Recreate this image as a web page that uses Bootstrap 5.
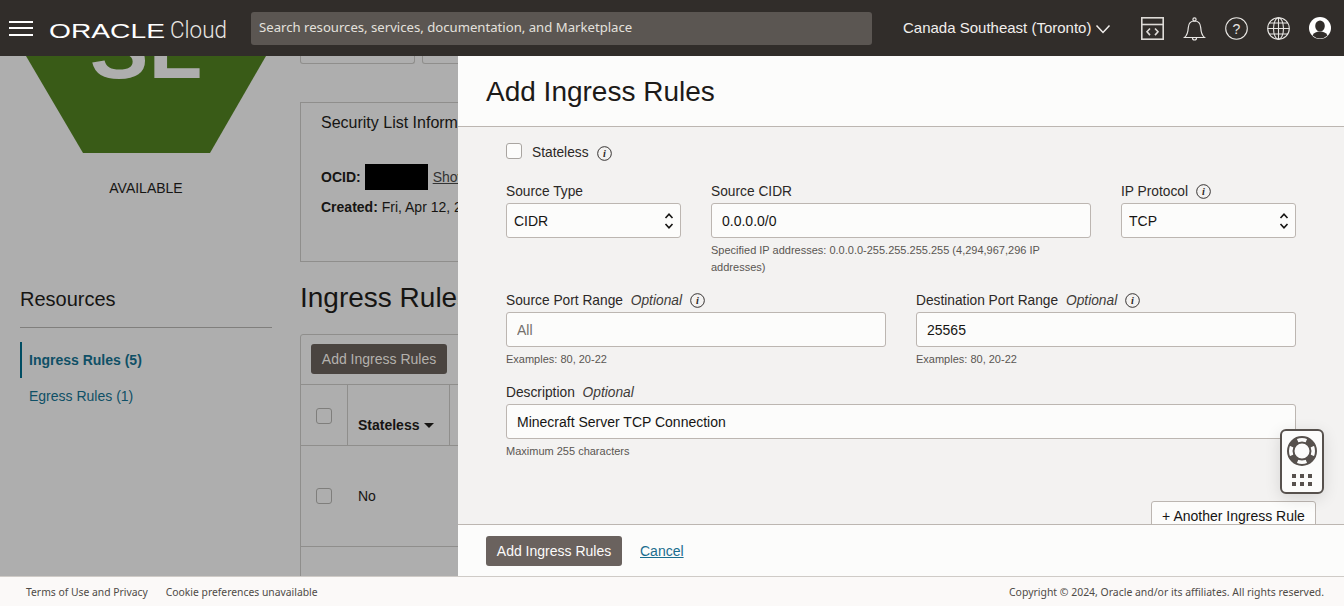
<!DOCTYPE html>
<html lang="en">
<head>
    <meta charset="UTF-8">
    <meta name="viewport" content="width=device-width, initial-scale=1.0">
    <title>Add Ingress Rules</title>
    <link rel="stylesheet" href="https://cdn.jsdelivr.net/npm/bootstrap@5.3.3/dist/css/bootstrap.min.css">
    <script src="https://cdn.jsdelivr.net/npm/bootstrap@5.3.3/dist/js/bootstrap.bundle.min.js"></script>
    <style>
        html, body { height: 606px; overflow: hidden; }
        body { font-family: "Liberation Sans", Arial, sans-serif; font-size: 14px; color: #161513; background: #aeaeae; }

        /* top bar */
        .topbar { height: 56px; background: #312d2a; color: #fcfbfa; padding: 0 12px 0 9px; flex: none; }
        .burger { width: 24px; height: 15px; border-top: 2px solid #fff; border-bottom: 2px solid #fff; position: relative; }
        .burger::after { content: ""; position: absolute; left: 0; right: 0; top: 4.500px; height: 2px; background: #fff; }
        .brand { margin-left: 16px; width: 179px; height: 30px; }
        .search-box { margin-left: 23px; width: 621px; height: 33px; background: #5b5652; border-radius: 3px; padding: 0 8px; font-family: "Noto Sans", sans-serif; font-size: 13.15px; line-height: 31px; color: #e4e1dd; }
        .region { margin-left: 31px; font-size: 15px; color: #f1efed; width: 238px; }
        .region svg { margin-top: 2px; }
        .bar-icons { gap: 19px; }

        /* page under the panel */
        .page-area { height: 520px; overflow: hidden; flex: none; }
        .side-col { width: 252px; margin-left: 20px; margin-right: 28px; flex: none; }
        .main-col { width: 1024px; flex: none; }
        .status-text { margin-top: 25px; text-align: center; line-height: 20px; }
        .res-title { margin-top: 88px; font-size: 20px; line-height: 26px; padding-bottom: 15px; border-bottom: 1px solid #807f7d; }
        .res-link { display: block; color: #0f5066; text-decoration: none; padding: 8px 0 8px 9px; line-height: 20px; height: 36px; }
        .res-link.on { margin-top: 14px; border-left: 2px solid #004d63; font-weight: 700; padding-left: 7px; }
        .crumb-btns { height: 8px; gap: 7px; }
        .crumb-btn { width: 115px; height: 8px; border: 1px solid #8f8e8c; border-top: 0; border-radius: 0 0 3px 3px; }
        .info-box { margin-top: 38px; height: 160px; border: 1px solid #8f8e8c; padding: 9px 20px; }
        .info-title { font-size: 16px; line-height: 22px; }
        .ocid-row { margin-top: 30px; height: 26px; }
        .ocid-mask { width: 63px; height: 26px; background: #000; margin: 0 5px 0 4px; }
        .under-link { color: #333; text-decoration: underline; }
        .created-row { margin-top: 4px; line-height: 26px; }
        .rules-title { font-size: 28px; line-height: 36px; margin-top: 18px; margin-bottom: 18px; font-weight: 400; }
        .rules-card { border: 1px solid #8f8e8c; border-radius: 3px 3px 0 0; height: 260px; }
        .rules-tools { height: 50px; padding: 9px 10px; border-bottom: 1px solid #8f8e8c; }
        .dim-btn { background: #4a4440; color: #b4b1ad; border-radius: 3px; width: 136px; height: 30px; line-height: 30px; text-align: center; }
        .head-row { height: 61px; border-bottom: 1px solid #8f8e8c; }
        .body-row { height: 101px; border-bottom: 1px solid #8f8e8c; }
        .cell-check { width: 47px; border-right: 1px solid #8f8e8c; padding: 23px 0 0 15px; }
        .cell-state { width: 102px; border-right: 1px solid #8f8e8c; padding: 30px 0 0 10px; font-weight: 700; line-height: 20px; }
        .cell-plain { width: 57px; padding-left: 15px; }
        .dim-check { width: 16px; height: 16px; border: 1px solid #7f7e7c; border-radius: 3px; }
        .caret-down { display: inline-block; margin-left: 5px; vertical-align: 2px; border: 5px solid transparent; border-top-color: #161513; border-bottom: 0; }

        /* slide-in panel */
        .side-panel { top: 0; bottom: 0; right: 0; width: 886px; background: #f3f2f1; }
        .panel-head { height: 71px; flex: none; background: #fcfcfb; border-bottom: 1px solid #bcb6b1; padding-left: 28px; padding-top: 1px; }
        .panel-head h2 { font-size: 28px; line-height: 70px; margin: 0; font-weight: 400; color: #1c1a18; }
        .panel-body { height: 397px; overflow: hidden; padding: 15px 28px 0; }
        .panel-foot { height: 52px; flex: none; background: #fcfcfb; border-top: 1px solid #bcb6b1; padding-left: 28px; }
        .form-inner { padding: 0 20px; }
        .state-row { height: 20px; line-height: 20px; font-size: 13.75px; color: #2b2826; }
        .state-row label { padding-top: 2px; }
        .state-row .form-check-input { width: 16px; height: 16px; margin: -2px 10px 0 0; background-color: #fcfcfb; border-color: #a9a5a1; border-radius: 3px; }
        .state-row .info-ico { margin-left: 8px; margin-top: 2px; }
        .field-row { gap: 30px; }
        .field-narrow { width: 175px; flex: none; }
        .field-wide { width: 380px; flex: none; }
        .fld-label { display: block; font-size: 13.75px; line-height: 20px; padding-top: 1px; margin-bottom: 1px; color: #2b2826; }
        .fld-label em { margin-left: 4px; color: #3f3c39; }
        .info-ico { margin-left: 4px; vertical-align: -3px; }
        .part-one { margin-top: 19px; }
        .part-two { margin-top: 14px; }
        .fld-input.form-control, .fld-input.form-select { height: 35px; font-size: 14px; border: 1px solid #bcb6b1; border-radius: 3px; background-color: #fcfcfb; color: #161513; padding: 0 10px; box-shadow: none; }
        .fld-input.form-select { padding: 2px 0 0 7px; background-size: 10px 18px; background-position: right 6px center; --bs-form-select-bg-img: url("data:image/svg+xml,%3Csvg xmlns='http://www.w3.org/2000/svg' viewBox='0 0 10 18'%3E%3Cpath fill='none' stroke='%23161513' stroke-width='1.6' d='M1.5 6 5 2.2 8.5 6M1.5 12 5 15.8 8.5 12'/%3E%3C/svg%3E"); }
        .fld-input::placeholder { color: #74706c; opacity: 1; }
        .fld-help { font-size: 11px; line-height: 17px; color: #5a5652; margin-top: 4px; }
        .more-btn { background: #fcfcfb; border: 1px solid #bcb6b1; border-radius: 3px; font-size: 14px; color: #161513; width: 165px; height: 32px; padding: 0 0 2px; line-height: 26px; margin-top: 41px; }
        .add-btn { background: #6a625e; color: #fcfbfa; border-radius: 3px; font-size: 14px; width: 136px; height: 30px; padding: 1px 0 0; border: 0; }
        .cancel-link { margin-left: 18px; margin-top: 1px; color: #1a6d8e; text-decoration: underline; }

        /* help widget */
        .help-widget { top: 373px; left: 1280px; width: 44px; height: 65px; background: #fcfcfb; border: 2px solid #57514d; border-radius: 6px; box-shadow: 0 4px 16px rgba(0,0,0,.12); padding-top: 5px; }

        /* footer */
        .page-foot { height: 30px; flex: none; background: #fbf9f8; border-top: 1px solid #cfcbc7; padding: 2px 20px 0 26px; font-family: "Noto Sans", sans-serif; font-size: 10.35px; color: #4f4b47; }
        .foot-item { margin-left: 18px; }
        .foot-copy { font-size: 10.45px; }
    </style>
</head>
<body class="d-flex flex-column">
    <header class="topbar d-flex align-items-center">
        <div class="burger"></div>
        <svg class="brand" viewBox="0 0 179 30">
            <text x="0" y="24.700" font-family="Liberation Sans" font-size="20" fill="#fff" textLength="116" lengthAdjust="spacingAndGlyphs">ORACLE</text>
            <text x="121" y="25" font-family="Roboto" font-weight="300" font-size="23" fill="#e8e6e3" textLength="57" lengthAdjust="spacingAndGlyphs">Cloud</text>
        </svg>
        <div class="search-box">Search resources, services, documentation, and Marketplace</div>
        <div class="region d-flex align-items-center">
            <span>Canada Southeast (Toronto)</span>
            <svg class="ms-1" width="16" height="10" viewBox="0 0 16 10"><path d="M1.500 1.500 8 8.500 14.500 1.500" fill="none" stroke="#f1efed" stroke-width="1.500"/></svg>
        </div>
        <div class="bar-icons d-flex align-items-center">
            <svg width="23" height="23" viewBox="0 0 23 23" fill="none" stroke="#dedbd7" stroke-width="1.600"><rect x=".8" y=".8" width="21.400" height="21.400"/><path d="M.8 7.500h21.400"/><path d="M9 11.500 6 14.800l3 3.300M14 11.500l3 3.300-3 3.300"/></svg>
            <svg width="23" height="25" viewBox="0 0 23 25" fill="none" stroke="#e8e6e3" stroke-width="1.200"><path d="M1.500 21.500h20c-2.500-2-3.500-5-3.800-10-.3-4-2.500-6.500-6.200-6.500s-5.900 2.500-6.200 6.500c-.3 5-1.300 8-3.800 10z"/><circle cx="11.500" cy="3.500" r="1.600"/><path d="M9.500 22a2 2 0 0 0 4 0"/></svg>
            <svg width="23" height="23" viewBox="0 0 23 23"><circle cx="11.500" cy="11.500" r="10.800" fill="none" stroke="#e8e6e3" stroke-width="1.100"/><text x="11.500" y="16.500" text-anchor="middle" font-family="Liberation Sans" font-size="14" fill="#e8e6e3">?</text></svg>
            <svg width="23" height="23" viewBox="0 0 23 23" fill="none" stroke="#e8e6e3" stroke-width="1.100"><circle cx="11.500" cy="11.500" r="10.800"/><ellipse cx="11.500" cy="11.500" rx="5" ry="10.800"/><path d="M11.500 .7v21.600M.7 11.500h21.600M2.500 6h18M2.500 17h18"/></svg>
            <svg width="22" height="22" viewBox="0 0 22 22"><circle cx="11" cy="11" r="11" fill="#fff"/><ellipse cx="11" cy="9" rx="4.800" ry="5.600" fill="#312d2a"/><path d="M3.500 18.500c1.500-3 4-4 7.500-4s6 1 7.500 4a11 11 0 0 1-15 0z" fill="#312d2a"/></svg>
        </div>
    </header>

    <div class="page-area d-flex position-relative">
        <aside class="side-col">
            <svg class="d-block" width="252" height="97" viewBox="0 0 252 97">
                <polygon points="6,0 246,0 190,97 63,97" fill="#395b17"/>
                <text x="126" y="21.500" text-anchor="middle" font-family="Liberation Sans" font-weight="700" font-size="88" fill="#aeaeae">SL</text>
            </svg>
            <div class="status-text">AVAILABLE</div>
            <div class="res-title">Resources</div>
            <a class="res-link on" href="#">Ingress Rules (5)</a>
            <a class="res-link" href="#">Egress Rules (1)</a>
        </aside>
        <main class="main-col">
            <div class="crumb-btns d-flex">
                <div class="crumb-btn"></div>
                <div class="crumb-btn"></div>
            </div>
            <div class="info-box">
                <div class="info-title">Security List Information</div>
                <div class="ocid-row d-flex align-items-center">
                    <b>OCID:</b><span class="ocid-mask"></span><a class="under-link" href="#">Show</a>
                </div>
                <div class="created-row"><b>Created:</b> Fri, Apr 12, 2024</div>
            </div>
            <h1 class="rules-title">Ingress Rules</h1>
            <div class="rules-card">
                <div class="rules-tools"><div class="dim-btn">Add Ingress Rules</div></div>
                <div class="head-row d-flex">
                    <div class="cell-check"><div class="dim-check"></div></div>
                    <div class="cell-state">Stateless<span class="caret-down"></span></div>
                </div>
                <div class="body-row d-flex align-items-center">
                    <div class="cell-plain"><div class="dim-check"></div></div>
                    <div>No</div>
                </div>
            </div>
        </main>

        <section class="side-panel position-absolute d-flex flex-column">
            <div class="panel-head"><h2>Add Ingress Rules</h2></div>
            <div class="panel-body">
                <div class="form-inner">
                    <div class="state-row d-flex align-items-center">
                        <input class="form-check-input" type="checkbox" id="stateless">
                        <label for="stateless">Stateless</label>
                        <svg class="info-ico" width="15" height="15" viewBox="0 0 16 16"><circle cx="8" cy="8" r="7.300" fill="none" stroke="#2b2826"/><text x="8" y="11.500" text-anchor="middle" font-family="Liberation Serif" font-style="italic" font-weight="700" font-size="11" fill="#2b2826">i</text></svg>
                    </div>
                    <div class="field-row d-flex part-one">
                        <div class="field-narrow">
                            <label class="fld-label">Source Type</label>
                            <select class="form-select fld-input"><option>CIDR</option></select>
                        </div>
                        <div class="field-wide">
                            <label class="fld-label">Source CIDR</label>
                            <input class="form-control fld-input" value="0.0.0.0/0">
                            <div class="fld-help">Specified IP addresses: 0.0.0.0-255.255.255.255 (4,294,967,296 IP addresses)</div>
                        </div>
                        <div class="field-narrow">
                            <label class="fld-label">IP Protocol
                                <svg class="info-ico" width="15" height="15" viewBox="0 0 16 16"><circle cx="8" cy="8" r="7.300" fill="none" stroke="#2b2826"/><text x="8" y="11.500" text-anchor="middle" font-family="Liberation Serif" font-style="italic" font-weight="700" font-size="11" fill="#2b2826">i</text></svg>
                            </label>
                            <select class="form-select fld-input"><option>TCP</option></select>
                        </div>
                    </div>
                    <div class="field-row d-flex part-two">
                        <div class="field-wide">
                            <label class="fld-label">Source Port Range <em>Optional</em>
                                <svg class="info-ico" width="15" height="15" viewBox="0 0 16 16"><circle cx="8" cy="8" r="7.300" fill="none" stroke="#2b2826"/><text x="8" y="11.500" text-anchor="middle" font-family="Liberation Serif" font-style="italic" font-weight="700" font-size="11" fill="#2b2826">i</text></svg>
                            </label>
                            <input class="form-control fld-input" placeholder="All">
                            <div class="fld-help">Examples: 80, 20-22</div>
                        </div>
                        <div class="field-wide">
                            <label class="fld-label">Destination Port Range <em>Optional</em>
                                <svg class="info-ico" width="15" height="15" viewBox="0 0 16 16"><circle cx="8" cy="8" r="7.300" fill="none" stroke="#2b2826"/><text x="8" y="11.500" text-anchor="middle" font-family="Liberation Serif" font-style="italic" font-weight="700" font-size="11" fill="#2b2826">i</text></svg>
                            </label>
                            <input class="form-control fld-input" value="25565">
                            <div class="fld-help">Examples: 80, 20-22</div>
                        </div>
                    </div>
                    <div class="part-two">
                        <label class="fld-label">Description <em>Optional</em></label>
                        <input class="form-control fld-input" value="Minecraft Server TCP Connection">
                        <div class="fld-help">Maximum 255 characters</div>
                    </div>
                </div>
                <div class="text-end"><button class="btn more-btn">+ Another Ingress Rule</button></div>
            </div>
            <div class="panel-foot d-flex align-items-center">
                <button class="btn add-btn">Add Ingress Rules</button>
                <a class="cancel-link" href="#">Cancel</a>
            </div>
        </section>

        <div class="help-widget position-absolute d-flex flex-column align-items-center">
            <svg width="30" height="30" viewBox="0 0 30 30" fill="none" stroke="#57514d" stroke-width="2">
                <circle cx="15" cy="15" r="14"/>
                <circle cx="15" cy="15" r="8.500"/>
                <g fill="#57514d" stroke="none">
                    <path d="M27.890 20.470A14 14 0 0 1 20.470 27.890L18.320 22.820A8.500 8.500 0 0 0 22.820 18.320Z"/>
                    <path d="M27.890 20.470A14 14 0 0 1 20.470 27.890L18.320 22.820A8.500 8.500 0 0 0 22.820 18.320Z" transform="rotate(90 15 15)"/>
                    <path d="M27.890 20.470A14 14 0 0 1 20.470 27.890L18.320 22.820A8.500 8.500 0 0 0 22.820 18.320Z" transform="rotate(180 15 15)"/>
                    <path d="M27.890 20.470A14 14 0 0 1 20.470 27.890L18.320 22.820A8.500 8.500 0 0 0 22.820 18.320Z" transform="rotate(270 15 15)"/>
                </g>
            </svg>
            <svg class="mt-2" width="20" height="12" viewBox="0 0 20 12" fill="#57514d"><rect width="4" height="4"/><rect x="8" width="4" height="4"/><rect x="16" width="4" height="4"/><rect y="8" width="4" height="4"/><rect x="8" y="8" width="4" height="4"/><rect x="16" y="8" width="4" height="4"/></svg>
        </div>
    </div>

    <footer class="page-foot d-flex align-items-center">
        <span>Terms of Use and Privacy</span>
        <span class="foot-item">Cookie preferences unavailable</span>
        <span class="ms-auto foot-copy">Copyright © 2024, Oracle and/or its affiliates. All rights reserved.</span>
    </footer>
</body>
</html>
